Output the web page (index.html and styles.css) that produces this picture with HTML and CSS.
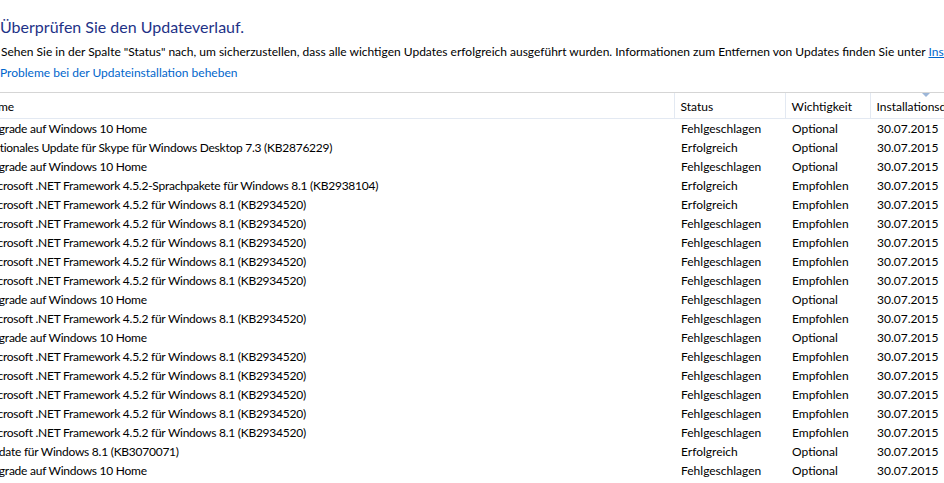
FILE: index.html
```html
<!DOCTYPE html>
<html lang="de">
<head>
<meta charset="utf-8">
<title>Updateverlauf</title>
<link rel="stylesheet" href="styles.css">
</head>
<body>
<div class="page">
  <h1 class="title">Überprüfen Sie den Updateverlauf.</h1>
  <p class="intro">Sehen Sie in der Spalte "Status" nach, um sicherzustellen, dass alle wichtigen Updates erfolgreich ausgeführt wurden. Informationen zum Entfernen von Updates finden Sie unter <a class="link" href="#">Installierte Updates</a>.</p>
  <p class="help"><a class="link" href="#">Probleme bei der Updateinstallation beheben</a></p>
  <div class="listwrap">
    <table class="list">
      <colgroup>
        <col class="c-name"><col class="c-status"><col class="c-imp"><col class="c-date">
      </colgroup>
      <thead>
        <tr>
          <th>Name</th>
          <th>Status</th>
          <th>Wichtigkeit</th>
          <th class="sorted">Installationsdatum<span class="sortarrow"></span></th>
        </tr>
      </thead>
      <tbody>
        <tr><td>Upgrade auf Windows 10 Home</td><td>Fehlgeschlagen</td><td>Optional</td><td>30.07.2015</td></tr>
        <tr><td>Optionales Update für Skype für Windows Desktop 7.3 (KB2876229)</td><td>Erfolgreich</td><td>Optional</td><td>30.07.2015</td></tr>
        <tr><td>Upgrade auf Windows 10 Home</td><td>Fehlgeschlagen</td><td>Optional</td><td>30.07.2015</td></tr>
        <tr><td>Microsoft .NET Framework 4.5.2-Sprachpakete für Windows 8.1 (KB2938104)</td><td>Erfolgreich</td><td>Empfohlen</td><td>30.07.2015</td></tr>
        <tr><td>Microsoft .NET Framework 4.5.2 für Windows 8.1 (KB2934520)</td><td>Erfolgreich</td><td>Empfohlen</td><td>30.07.2015</td></tr>
        <tr><td>Microsoft .NET Framework 4.5.2 für Windows 8.1 (KB2934520)</td><td>Fehlgeschlagen</td><td>Empfohlen</td><td>30.07.2015</td></tr>
        <tr><td>Microsoft .NET Framework 4.5.2 für Windows 8.1 (KB2934520)</td><td>Fehlgeschlagen</td><td>Empfohlen</td><td>30.07.2015</td></tr>
        <tr><td>Microsoft .NET Framework 4.5.2 für Windows 8.1 (KB2934520)</td><td>Fehlgeschlagen</td><td>Empfohlen</td><td>30.07.2015</td></tr>
        <tr><td>Microsoft .NET Framework 4.5.2 für Windows 8.1 (KB2934520)</td><td>Fehlgeschlagen</td><td>Empfohlen</td><td>30.07.2015</td></tr>
        <tr><td>Upgrade auf Windows 10 Home</td><td>Fehlgeschlagen</td><td>Optional</td><td>30.07.2015</td></tr>
        <tr><td>Microsoft .NET Framework 4.5.2 für Windows 8.1 (KB2934520)</td><td>Fehlgeschlagen</td><td>Empfohlen</td><td>30.07.2015</td></tr>
        <tr><td>Upgrade auf Windows 10 Home</td><td>Fehlgeschlagen</td><td>Optional</td><td>30.07.2015</td></tr>
        <tr><td>Microsoft .NET Framework 4.5.2 für Windows 8.1 (KB2934520)</td><td>Fehlgeschlagen</td><td>Empfohlen</td><td>30.07.2015</td></tr>
        <tr><td>Microsoft .NET Framework 4.5.2 für Windows 8.1 (KB2934520)</td><td>Fehlgeschlagen</td><td>Empfohlen</td><td>30.07.2015</td></tr>
        <tr><td>Microsoft .NET Framework 4.5.2 für Windows 8.1 (KB2934520)</td><td>Fehlgeschlagen</td><td>Empfohlen</td><td>30.07.2015</td></tr>
        <tr><td>Microsoft .NET Framework 4.5.2 für Windows 8.1 (KB2934520)</td><td>Fehlgeschlagen</td><td>Empfohlen</td><td>30.07.2015</td></tr>
        <tr><td>Microsoft .NET Framework 4.5.2 für Windows 8.1 (KB2934520)</td><td>Fehlgeschlagen</td><td>Empfohlen</td><td>30.07.2015</td></tr>
        <tr><td>Update für Windows 8.1 (KB3070071)</td><td>Erfolgreich</td><td>Optional</td><td>30.07.2015</td></tr>
        <tr><td>Upgrade auf Windows 10 Home</td><td>Fehlgeschlagen</td><td>Optional</td><td>30.07.2015</td></tr>
      </tbody>
    </table>
  </div>
</div>
</body>
</html>
```

FILE: styles.css
```css
html, body {
  margin: 0;
  padding: 0;
  background: #ffffff;
  overflow: hidden;
}
body {
  width: 944px;
  height: 483px;
  font-family: "Lato", "Noto Sans", sans-serif;
  font-size: 12px;
  color: #000000;
}
.page {
  width: 1100px;
  padding-top: 13px;
}
.title {
  margin: 0;
  font-size: 16px;
  font-weight: normal;
  line-height: 28px;
  color: #1e3287;
  white-space: nowrap;
}
.intro {
  margin: 1px 0 0 0;
  line-height: 20px;
  white-space: nowrap;
  padding-left: 1px;
}
.help {
  margin: 1px 0 0 0;
  line-height: 20px;
  white-space: nowrap;
}
.link {
  color: #0066cc;
  text-decoration: none;
}
.intro .link {
  text-decoration: underline;
}
.listwrap {
  margin-top: 9px;
  margin-left: -23px;
  border-top: 1px solid #d5d5d5;
}
.list {
  border-collapse: collapse;
  table-layout: fixed;
  width: 1002px;
}
.c-name { width: 697px; }
.c-status { width: 111px; }
.c-imp { width: 85px; }
.c-date { width: 109px; }
.list th {
  height: 24px;
  padding: 1px 0 0 6px;
  font-weight: normal;
  text-align: left;
  border-bottom: 1px solid #e3e9f2;
  border-left: 1px solid #e3e9f2;
  white-space: nowrap;
  overflow: hidden;
  color: #000000;
}
.list th:first-child {
  border-left: none;
}
.list th.sorted {
  position: relative;
  overflow: visible;
}
.sortarrow {
  position: absolute;
  top: 0;
  left: 51px;
  width: 0;
  height: 0;
  border-left: 4px solid transparent;
  border-right: 4px solid transparent;
  border-top: 4px solid #9cb6d8;
}
.list td {
  height: 19px;
  padding: 0 0 0 7px;
  white-space: nowrap;
  overflow: hidden;
  line-height: 19px;
}
.list td:first-child {
  letter-spacing: -0.25px;
}
```
